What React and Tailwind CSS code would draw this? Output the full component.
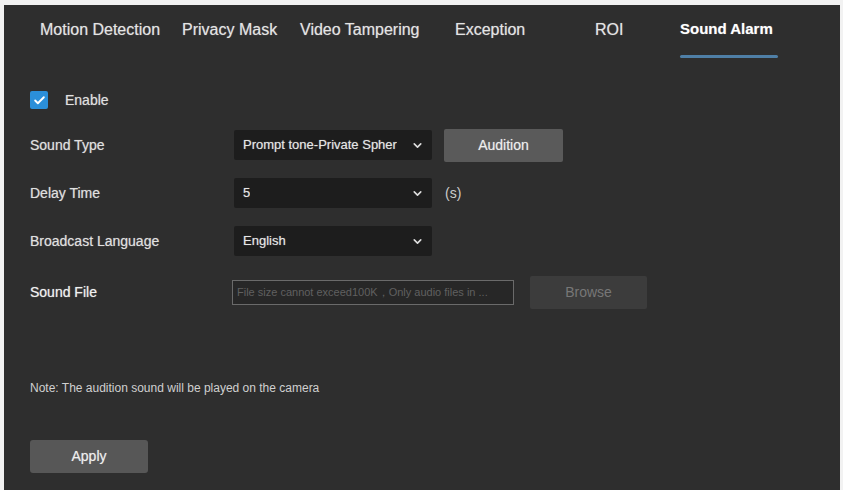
import { Check, ChevronDown } from 'lucide-react';

const tabs = ['Motion Detection', 'Privacy Mask', 'Video Tampering', 'Exception', 'ROI', 'Sound Alarm'];
const tabPos = ['w-[142px]', 'w-[118px]', 'w-[155px]', 'w-[140px]', 'w-[85px]', 'w-[98px]'];

function Select({ value }) {
  return (
    <div className="w-[198px] h-[30px] bg-[#1d1d1d] rounded-[2px] flex items-center justify-between pl-[9px] pr-[8px] text-[13px] text-[#e6e6e6] [text-shadow:0_0_1px_rgba(255,255,255,0.45)]">
      <span className="truncate whitespace-nowrap">{value}</span>
      <ChevronDown size={13} strokeWidth={3} className="text-[#ddd] shrink-0" />
    </div>
  );
}

function Row({ label, children }) {
  return (
    <div className="flex items-center h-[48px]">
      <div className="w-[204px] text-[14px] text-[#e0e0e0] [text-shadow:0_0_1px_rgba(255,255,255,0.45)]">{label}</div>
      {children}
    </div>
  );
}

export default function App() {
  return (
    <div className="w-[843px] h-[490px] bg-[#f2f2f2] pt-[5px] pl-[4px] pr-[3px] font-['Liberation_Sans',Arial,sans-serif]">
      <div className="h-full bg-[#2e2e2e] flex flex-col">
        {/* tabs */}
        <div className="flex items-start h-[56px] pt-[13px] pl-[36px] text-[16px] text-[#e4e4e4] [text-shadow:0_0_1px_rgba(255,255,255,0.45)]">
          {tabs.map((t, i) => (
            <div key={t} className={`${tabPos[i]} shrink-0 flex flex-col whitespace-nowrap`}>
              <span className={i === 5 ? 'font-bold text-white text-[15px]' : ''}>{t}</span>
              {i === 5 && <div className="mt-[14px] h-[3px] bg-[#4f7fa6] rounded-full" />}
            </div>
          ))}
        </div>

        <div className="pl-[26px] pt-[26px]">
          <div className="flex items-center gap-[17px] h-[26px]">
            <div className="w-[18px] h-[18px] bg-[#2b8fd9] rounded-[2px] flex items-center justify-center">
              <Check size={13} strokeWidth={3.5} className="text-white" />
            </div>
            <span className="text-[14px] text-[#e0e0e0] [text-shadow:0_0_1px_rgba(255,255,255,0.45)]">Enable</span>
          </div>

          <div className="mt-[8px]">
            <Row label="Sound Type">
              <Select value="Prompt tone-Private Spher" />
              <button className="ml-[12px] w-[119px] h-[33px] bg-[#5a5a5a] rounded-[2px] text-[14px] text-[#eee] [text-shadow:0_0_1px_rgba(255,255,255,0.45)]">Audition</button>
            </Row>
            <Row label="Delay Time">
              <Select value="5" />
              <span className="ml-[13px] text-[14px] text-[#ccc]">(s)</span>
            </Row>
            <Row label="Broadcast Language">
              <Select value="English" />
            </Row>
            <div className="flex items-center h-[54px]">
              <div className="w-[202px] text-[14px] text-[#f0f0f0] [text-shadow:0_0_1px_rgba(255,255,255,0.6)]">Sound File</div>
              <div className="w-[282px] h-[25px] border border-[#6a6a6a] bg-[#272727] flex items-center px-[4px] text-[11px] text-[#606060] whitespace-nowrap overflow-hidden">
                File size cannot exceed100K，Only audio files in ...
              </div>
              <button className="ml-[16px] w-[117px] h-[33px] bg-[#3c3c3c] rounded-[2px] text-[14px] text-[#777]">Browse</button>
            </div>
          </div>

          <div className="mt-[61px] text-[12px] leading-[16px] text-[#d0d0d0]">Note: The audition sound will be played on the camera</div>

          <button className="mt-[44px] w-[118px] h-[33px] bg-[#575757] rounded-[3px] text-[14px] text-[#eee] [text-shadow:0_0_1px_rgba(255,255,255,0.45)]">Apply</button>
        </div>
      </div>
    </div>
  );
}
